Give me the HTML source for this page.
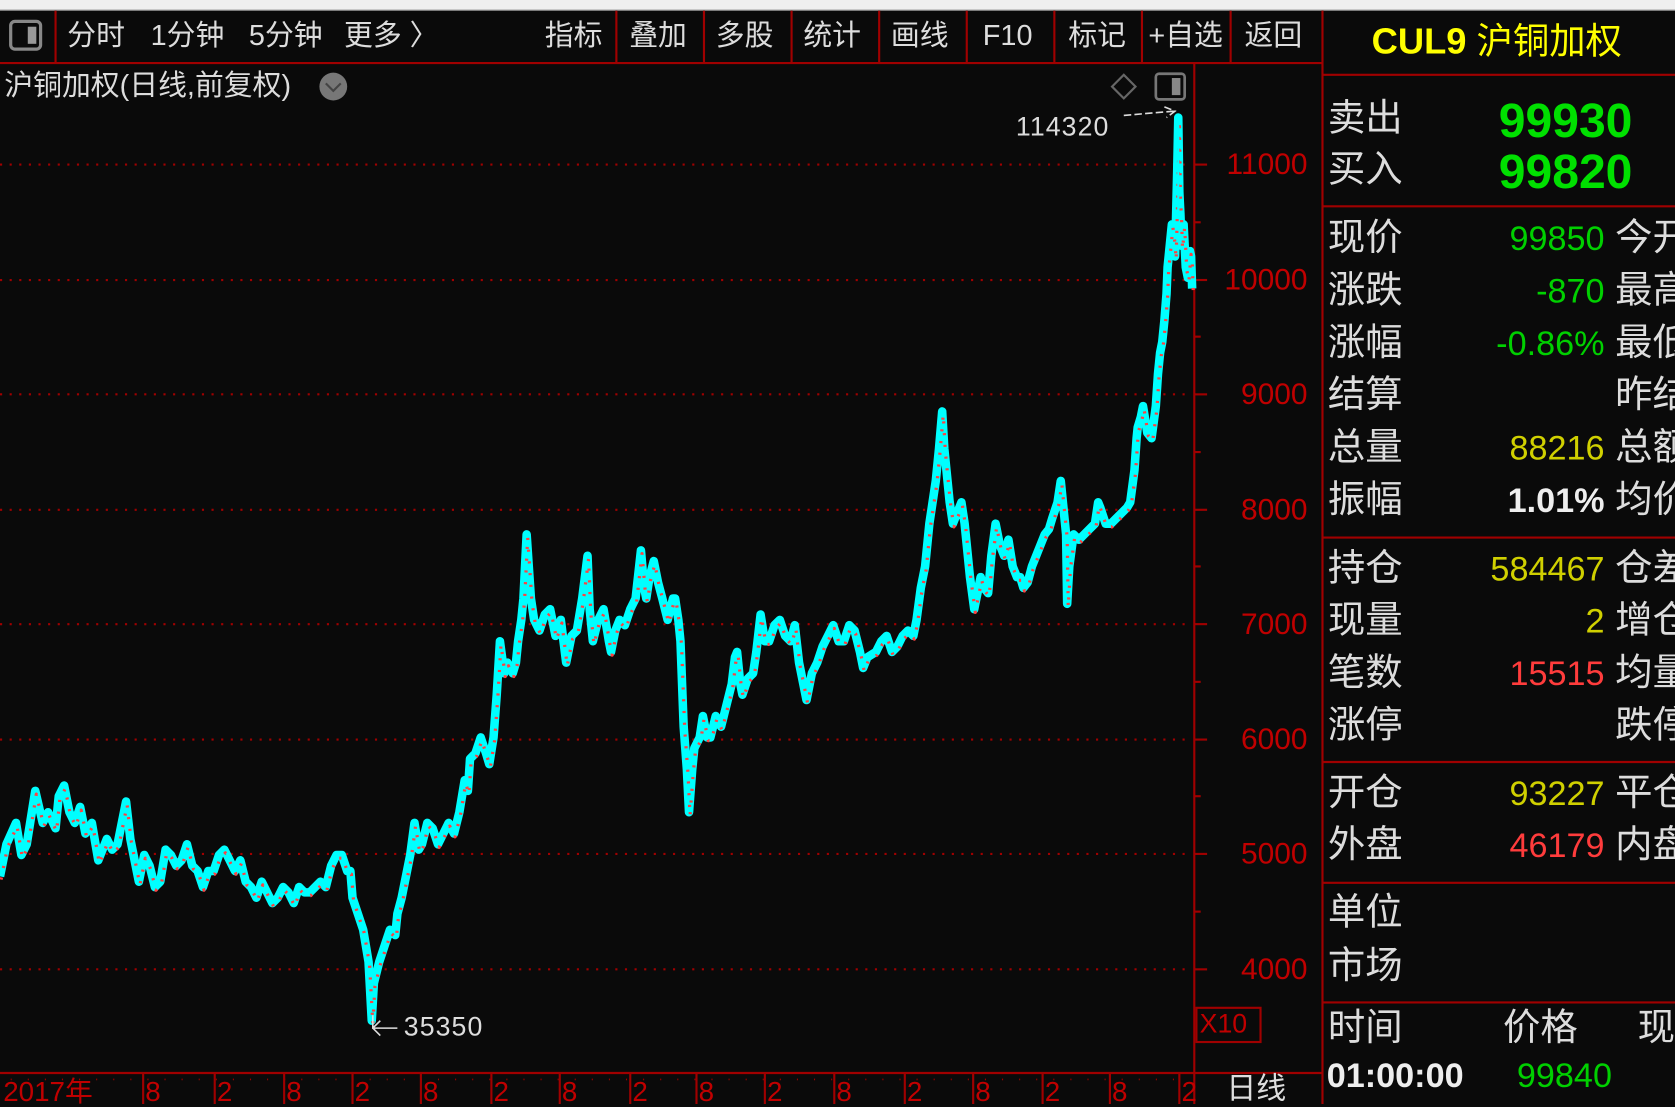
<!DOCTYPE html>
<html><head><meta charset="utf-8"><style>
html,body{margin:0;padding:0;background:#0a0a0a;width:1675px;height:1104px;overflow:hidden}
#w{position:absolute;left:0;top:0;width:1568px;height:1033px;transform:scale(1.06824,1.06873);transform-origin:0 0;font-family:"Liberation Sans","Noto Sans CJK SC",sans-serif;color:#ddd}
.t{position:absolute;white-space:nowrap;line-height:1}
.tb{font-size:27px;top:20px;color:#ddd}
.lab{font-size:35px;color:#ddd;left:1243px}
.num{font-size:32px;right:66px;text-align:right}
.rl{font-size:35px;color:#ddd;left:1512px}
.ax{font-size:28px;color:#c00000;right:344px;text-align:right}
.dt{font-size:26px;color:#c00000;top:1008px}
</style></head><body><div id="w">
<div style="position:absolute;left:0;top:0;width:1568px;height:9px;background:#efefef;border-bottom:1px solid #888"></div>
<svg width="1568" height="1033" style="position:absolute;left:0;top:0">
<defs>
<polyline id="pl" fill="none" stroke-linejoin="round" points="0,820 6,790 15,770 20,800 25,790 33,740 40,770 45,760 52,775 55,745 60,735 65,760 70,770 75,755 80,780 86,770 92,805 100,785 105,795 110,790 118,750 122,785 125,800 130,825 135,800 140,810 145,830 150,825 155,795 160,800 165,810 170,805 175,790 180,810 185,815 190,830 195,815 200,815 205,800 210,795 215,805 220,815 225,805 230,825 235,830 240,840 245,825 250,835 255,845 260,840 265,830 270,835 275,845 280,830 285,835 290,835 295,830 300,825 305,830 310,810 315,800 320,800 325,815 328,815 330,840 335,855 340,870 345,900 348,955 350,920 355,900 360,885 365,870 370,875 372,855 376,840 380,820 384,800 388,770 392,795 395,790 400,770 405,775 410,790 415,780 420,770 425,780 430,760 435,730 438,740 440,710 445,705 450,690 455,705 458,715 462,690 465,650 468,600 472,630 475,620 480,630 483,620 485,600 488,580 490,560 493,500 495,530 497,560 500,580 505,590 510,575 515,570 520,595 525,580 530,620 535,595 540,590 545,560 550,520 552,570 555,600 560,580 565,570 570,600 572,610 576,590 580,580 585,585 590,570 595,560 600,515 603,550 605,560 608,540 612,525 616,545 620,560 625,580 630,560 632,560 635,580 637,600 640,680 643,720 645,760 648,720 650,700 655,690 658,670 662,690 665,690 670,670 675,680 680,660 685,640 688,615 690,610 693,640 695,650 700,635 705,630 708,610 712,575 716,600 720,600 725,585 730,580 735,595 740,600 744,585 748,620 752,640 755,655 758,640 760,630 765,620 770,605 775,595 780,585 785,600 790,600 795,585 800,590 805,610 808,625 812,615 820,610 825,600 830,595 835,610 840,605 845,595 850,590 855,595 858,580 862,550 866,530 870,490 873,470 876,450 879,420 882,385 884,420 886,440 889,470 892,490 896,480 900,470 903,490 905,510 908,540 912,570 915,555 918,540 921,550 925,555 928,520 932,490 936,510 940,520 944,505 948,530 952,540 955,540 958,550 962,545 966,530 970,520 974,510 978,500 982,495 985,485 990,470 993,450 996,480 998,500 999,565 1001,530 1005,500 1010,505 1015,500 1020,495 1025,490 1028,470 1030,475 1035,490 1040,490 1045,485 1050,480 1055,475 1058,470 1060,455 1062,440 1064,410 1065,400 1068,390 1070,380 1074,405 1078,410 1080,395 1082,380 1084,350 1086,330 1088,320 1090,300 1092,275 1093,250 1095,230 1097,210 1099,225 1100,240 1102,160 1103,110 1104,180 1105,200 1106,230 1108,210 1110,250 1112,260 1114,235 1115,240 1116,270"/>
</defs>
<g stroke="#a00000" stroke-width="2" fill="none">
<line x1="0" y1="59" x2="1238" y2="59"/>
<line x1="1238" y1="10" x2="1238" y2="1033"/>
<line x1="52" y1="10" x2="52" y2="59"/>
<line x1="577" y1="10" x2="577" y2="59"/><line x1="659" y1="10" x2="659" y2="59"/><line x1="741" y1="10" x2="741" y2="59"/><line x1="823" y1="10" x2="823" y2="59"/><line x1="905" y1="10" x2="905" y2="59"/><line x1="987" y1="10" x2="987" y2="59"/><line x1="1069" y1="10" x2="1069" y2="59"/><line x1="1152" y1="10" x2="1152" y2="59"/>
<line x1="1238" y1="70" x2="1568" y2="70"/>
<line x1="1238" y1="193" x2="1568" y2="193"/>
<line x1="1238" y1="503" x2="1568" y2="503"/>
<line x1="1238" y1="713" x2="1568" y2="713"/>
<line x1="1238" y1="826" x2="1568" y2="826"/>
<line x1="1238" y1="938" x2="1568" y2="938"/>
<line x1="1118" y1="59" x2="1118" y2="1033"/>
<line x1="0" y1="1004" x2="1238" y2="1004"/>
<rect x="1120" y="943" width="60" height="32"/>
</g>
<g stroke="#a00000" stroke-width="2" stroke-dasharray="2 7">
<line x1="0" y1="154" x2="1110" y2="154"/><line x1="0" y1="262" x2="1110" y2="262"/><line x1="0" y1="369" x2="1110" y2="369"/><line x1="0" y1="477" x2="1110" y2="477"/><line x1="0" y1="584" x2="1110" y2="584"/><line x1="0" y1="692" x2="1110" y2="692"/><line x1="0" y1="799" x2="1110" y2="799"/><line x1="0" y1="907" x2="1110" y2="907"/>
</g>
<g stroke="#a00000" stroke-width="2">
<line x1="1118" y1="154" x2="1130" y2="154"/><line x1="1118" y1="208" x2="1124" y2="208"/><line x1="1118" y1="262" x2="1130" y2="262"/><line x1="1118" y1="315" x2="1124" y2="315"/><line x1="1118" y1="369" x2="1130" y2="369"/><line x1="1118" y1="423" x2="1124" y2="423"/><line x1="1118" y1="477" x2="1130" y2="477"/><line x1="1118" y1="530" x2="1124" y2="530"/><line x1="1118" y1="584" x2="1130" y2="584"/><line x1="1118" y1="638" x2="1124" y2="638"/><line x1="1118" y1="692" x2="1130" y2="692"/><line x1="1118" y1="745" x2="1124" y2="745"/><line x1="1118" y1="799" x2="1130" y2="799"/><line x1="1118" y1="853" x2="1124" y2="853"/><line x1="1118" y1="907" x2="1130" y2="907"/>
</g>
<g stroke="#a00000" stroke-width="2">
<line x1="134" y1="1004" x2="134" y2="1033"/><line x1="201" y1="1004" x2="201" y2="1033"/><line x1="266" y1="1004" x2="266" y2="1033"/><line x1="330" y1="1004" x2="330" y2="1033"/><line x1="394" y1="1004" x2="394" y2="1033"/><line x1="460" y1="1004" x2="460" y2="1033"/><line x1="524" y1="1004" x2="524" y2="1033"/><line x1="590" y1="1004" x2="590" y2="1033"/><line x1="652" y1="1004" x2="652" y2="1033"/><line x1="716" y1="1004" x2="716" y2="1033"/><line x1="781" y1="1004" x2="781" y2="1033"/><line x1="847" y1="1004" x2="847" y2="1033"/><line x1="911" y1="1004" x2="911" y2="1033"/><line x1="976" y1="1004" x2="976" y2="1033"/><line x1="1039" y1="1004" x2="1039" y2="1033"/><line x1="1104" y1="1004" x2="1104" y2="1033"/>
</g>
<g stroke="#a00000" stroke-width="1.5" stroke-dasharray="1 15">
<line x1="10" y1="1010" x2="1110" y2="1010"/>
</g>
<use href="#pl" stroke="#00ffff" stroke-width="8"/>
<use href="#pl" stroke="#ff4040" stroke-width="3" stroke-dasharray="2 9" transform="translate(1,3)"/>
<line x1="1103" y1="108" x2="1103" y2="200" stroke="#00ffff" stroke-width="2"/>
<g stroke="#ddd" stroke-width="1.5" fill="none">
<path d="M1052 108 L1099 104 M1090 100 L1100 104 L1092 110" stroke-dasharray="7 3"/>
<path d="M349 950 L349 962 L372 962 M349 962 L356 955 M349 962 L356 969"/>
</g>
<path d="M1052 70 L1063 81 L1052 92 L1041 81 Z" fill="none" stroke="#666" stroke-width="2"/>
<rect x="1082" y="69" width="27" height="24" rx="3" fill="none" stroke="#777" stroke-width="2.5"/><rect x="1097" y="73" width="8" height="16" fill="#888"/>
<rect x="10" y="20" width="28" height="26" rx="4" fill="none" stroke="#888" stroke-width="3"/><rect x="26" y="25" width="8" height="16" fill="#999"/>
<circle cx="312" cy="81" r="13" fill="#777"/><path d="M305 78 L312 85 L319 78" fill="none" stroke="#444" stroke-width="2"/>
</svg>
<div class="t tb" style="left:63px">分时</div>
<div class="t tb" style="left:141px">1分钟</div>
<div class="t tb" style="left:233px">5分钟</div>
<div class="t tb" style="left:322px">更多 〉</div>
<div class="t tb" style="left:510px">指标</div>
<div class="t tb" style="left:589px">叠加</div>
<div class="t tb" style="left:670px">多股</div>
<div class="t tb" style="left:752px">统计</div>
<div class="t tb" style="left:834px">画线</div>
<div class="t tb" style="left:920px">F10</div>
<div class="t tb" style="left:1000px">标记</div>
<div class="t tb" style="left:1075px">+自选</div>
<div class="t tb" style="left:1165px">返回</div>
<div class="t" style="left:4px;top:67px;font-size:27px;color:#ddd">沪铜加权(日线,前复权)</div>
<div class="t" style="left:951px;top:107px;font-size:25px;color:#ddd;letter-spacing:1px">114320</div>
<div class="t" style="left:378px;top:949px;font-size:25px;color:#ddd;letter-spacing:1px">35350</div>
<div class="t ax" style="top:140px">11000</div>
<div class="t ax" style="top:248px">10000</div>
<div class="t ax" style="top:355px">9000</div>
<div class="t ax" style="top:463px">8000</div>
<div class="t ax" style="top:570px">7000</div>
<div class="t ax" style="top:678px">6000</div>
<div class="t ax" style="top:785px">5000</div>
<div class="t ax" style="top:893px">4000</div>
<div class="t" style="left:1123px;top:946px;font-size:25px;color:#c00000">X10</div>
<div class="t dt" style="left:3px">2017年</div>
<div class="t dt" style="left:136px">8</div><div class="t dt" style="left:203px">2</div><div class="t dt" style="left:268px">8</div><div class="t dt" style="left:332px">2</div><div class="t dt" style="left:396px">8</div><div class="t dt" style="left:462px">2</div><div class="t dt" style="left:526px">8</div><div class="t dt" style="left:592px">2</div><div class="t dt" style="left:654px">8</div><div class="t dt" style="left:718px">2</div><div class="t dt" style="left:783px">8</div><div class="t dt" style="left:849px">2</div><div class="t dt" style="left:913px">8</div><div class="t dt" style="left:978px">2</div><div class="t dt" style="left:1041px">8</div><div class="t dt" style="left:1106px">2</div>
<div class="t" style="left:1148px;top:1005px;font-size:28px;color:#ddd">日线</div>
<div class="t" style="left:1284px;top:22px;font-size:34px;color:#ffff00;font-weight:bold">CUL9 <span style="font-weight:normal">沪铜加权</span></div>
<div class="t lab" style="top:93px">卖出</div><div class="t" style="left:1403px;top:90px;font-size:45px;font-weight:bold;color:#00e000">99930</div>
<div class="t lab" style="top:141px">买入</div><div class="t" style="left:1403px;top:138px;font-size:45px;font-weight:bold;color:#00e000">99820</div>
<div class="t lab" style="top:205px">现价</div><div class="t num" style="top:207px;color:#00d000">99850</div><div class="t rl" style="top:205px">今开</div>
<div class="t lab" style="top:254px">涨跌</div><div class="t num" style="top:256px;color:#00d000">-870</div><div class="t rl" style="top:254px">最高</div>
<div class="t lab" style="top:303px">涨幅</div><div class="t num" style="top:305px;color:#00d000">-0.86%</div><div class="t rl" style="top:303px">最低</div>
<div class="t lab" style="top:352px">结算</div><div class="t rl" style="top:352px">昨结</div>
<div class="t lab" style="top:401px">总量</div><div class="t num" style="top:403px;color:#d0d000">88216</div><div class="t rl" style="top:401px">总额</div>
<div class="t lab" style="top:450px">振幅</div><div class="t num" style="top:452px;color:#eee;font-weight:bold">1.01%</div><div class="t rl" style="top:450px">均价</div>
<div class="t lab" style="top:514px">持仓</div><div class="t num" style="top:516px;color:#d0d000">584467</div><div class="t rl" style="top:514px">仓差</div>
<div class="t lab" style="top:563px">现量</div><div class="t num" style="top:565px;color:#d0d000">2</div><div class="t rl" style="top:563px">增仓</div>
<div class="t lab" style="top:612px">笔数</div><div class="t num" style="top:614px;color:#ff3c3c">15515</div><div class="t rl" style="top:612px">均量</div>
<div class="t lab" style="top:661px">涨停</div><div class="t rl" style="top:661px">跌停</div>
<div class="t lab" style="top:724px">开仓</div><div class="t num" style="top:726px;color:#d0d000">93227</div><div class="t rl" style="top:724px">平仓</div>
<div class="t lab" style="top:773px">外盘</div><div class="t num" style="top:775px;color:#ff3c3c">46179</div><div class="t rl" style="top:773px">内盘</div>
<div class="t lab" style="top:836px">单位</div>
<div class="t lab" style="top:886px">市场</div>
<div class="t lab" style="top:944px">时间</div><div class="t" style="left:1407px;top:944px;font-size:35px;color:#ddd">价格</div><div class="t" style="left:1533px;top:944px;font-size:35px;color:#ddd">现量</div>
<div class="t" style="left:1242px;top:990px;font-size:32px;color:#eee;font-weight:bold">01:00:00</div>
<div class="t" style="left:1420px;top:990px;font-size:32px;color:#00d000">99840</div>
</div></body></html>
